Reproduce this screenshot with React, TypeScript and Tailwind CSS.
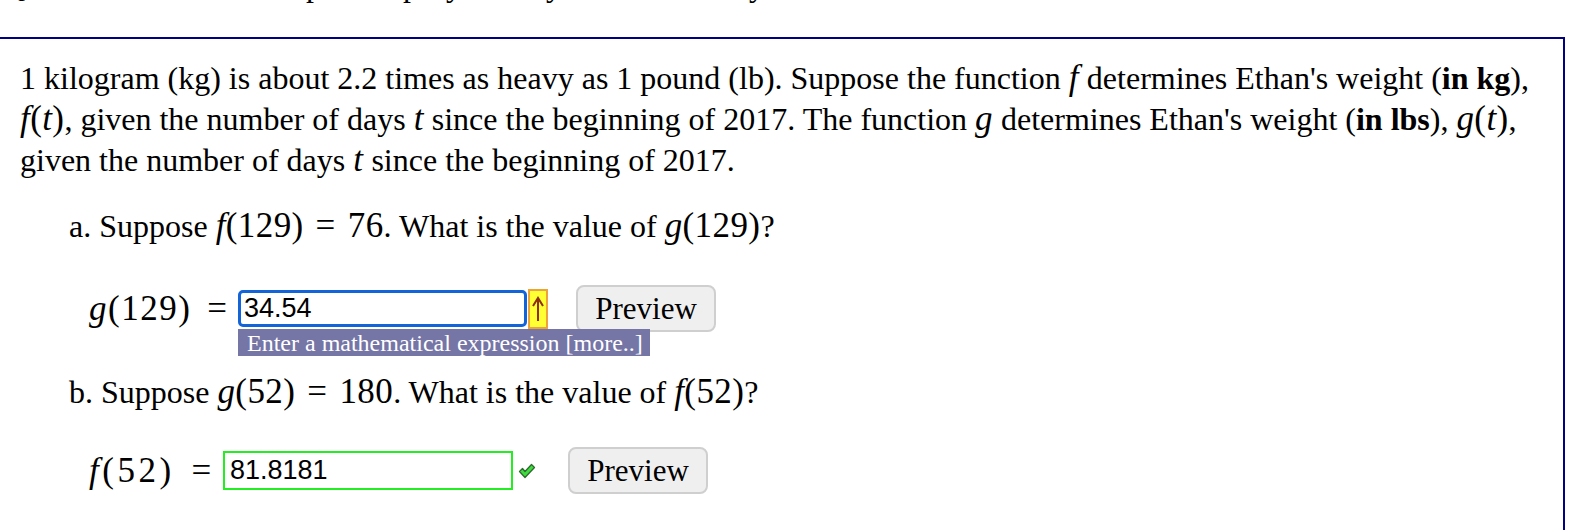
import React from 'react';

// math pieces are a little larger and wider than the text, as MathJax draws them
function M({ children, className }: { children: React.ReactNode; className?: string }) {
  return <span className={`text-[35px] leading-none ${className ?? 'tracking-[0.4px]'}`}>{children}</span>;
}

function V({ children }: { children: React.ReactNode }) {
  return <span className="italic">{children}</span>;
}

function Eq({ className }: { className?: string }) {
  return <span className={className ?? 'mx-[12px]'}>=</span>;
}

function PreviewButton({ className }: { className?: string }) {
  return (
    <button className={`h-[47px] w-[140px] shrink-0 rounded-[8px] border-2 border-[#cfcfcf] bg-[#efefef] text-[31px] leading-none text-black ${className ?? ''}`}>
      Preview
    </button>
  );
}

export default function App() {
  return (
    <div className="h-[530px] w-full overflow-hidden bg-white font-['Liberation_Serif','Times_New_Roman',serif] text-black">
      {/* cut-off line from above */}
      <div className="h-[37px] overflow-hidden">
        <div className="mt-[-31px] flex whitespace-pre text-[32px] leading-[32px]">
          <span className="ml-[2px]">Q</span>
          <span className="ml-[281px]">p</span>
          <span className="ml-[81px]">p</span>
          <span className="ml-[27px]">y</span>
          <span className="ml-[84px]">y</span>
          <span className="ml-[187px]">y</span>
        </div>
      </div>

      <div className="mr-[27px] h-[600px] border-t-2 border-r-2 border-[#000080] pl-[20px] pt-[19px]">
        <div className="whitespace-nowrap text-[32px] leading-[41px]">
          <div>
            1 kilogram (kg) is about 2.2 times as heavy as 1 pound (lb). Suppose the function <M><V>f</V></M> determines Ethan's weight (<b>in kg</b>),
          </div>
          <div>
            <M><V>f</V>(<V>t</V>)</M>, given the number of days <M><V>t</V></M> since the beginning of 2017. The function <M><V>g</V></M> determines Ethan's weight (<b>in lbs</b>), <M><V>g</V>(<V>t</V>)</M>,
          </div>
          <div>
            given the number of days <M><V>t</V></M> since the beginning of 2017.
          </div>
        </div>

        <div className="ml-[49px] mt-[25px] whitespace-nowrap text-[32px] leading-[41px]">
          a. Suppose <M><V>f</V>(129)<Eq />76</M>. What is the value of <M><V>g</V>(129)</M>?
        </div>

        <div className="ml-[69px] mt-[38px] flex h-[47px] items-center text-[32px]">
          <span className="w-[149px] shrink-0 whitespace-nowrap">
            <M className="tracking-[1.5px]"><V>g</V>(129)<Eq className="mx-[16px]" /></M>
          </span>
          <div className="relative">
            <div className="flex h-[37px] w-[289px] items-center rounded-[5px] border-[3px] border-[#1264d8] bg-white pl-[3px] font-['Liberation_Sans',Arial,sans-serif] text-[27px]">
              34.54
            </div>
            <div className="absolute left-0 top-[39px] flex h-[27px] w-[412px] items-center whitespace-nowrap bg-[#7575a6] pl-[9px] text-[24px] leading-none text-white">
              Enter a mathematical expression [more..]
            </div>
          </div>
          <div className="ml-[1px] flex h-[40px] w-[20px] items-center justify-center border-2 border-[#f0a23a] bg-[#ffff33]">
            <svg width="12" height="26" viewBox="0 0 12 26">
              <path d="M6 25 V4" stroke="#8b2f10" strokeWidth="2" />
              <path d="M1 10 L6 2 L11 10" fill="none" stroke="#8b2f10" strokeWidth="2" />
            </svg>
          </div>
          <PreviewButton className="ml-[28px]" />
        </div>

        <div className="ml-[49px] mt-[40px] whitespace-nowrap text-[32px] leading-[41px]">
          b. Suppose <M><V>g</V>(52)<Eq />180</M>. What is the value of <M><V>f</V>(52)</M>?
        </div>

        <div className="ml-[69px] mt-[34px] flex h-[47px] items-center text-[32px]">
          <span className="w-[134px] shrink-0 whitespace-nowrap">
            <M className="tracking-[3.5px]"><V>f</V>(52)<Eq className="ml-[17px]" /></M>
          </span>
          <div className="flex h-[39px] w-[290px] items-center border-2 border-[#22ee22] bg-white pl-[5px] font-['Liberation_Sans',Arial,sans-serif] text-[27px]">
            81.8181
          </div>
          <svg className="ml-[5px]" width="18" height="16" viewBox="0 0 18 16">
            <path d="M1.5 8.5 L4.5 5.5 L7 8.5 L13.5 1.5 L16.5 4.5 L7 14.5 Z" fill="#3fdc3f" stroke="#2d6b2d" strokeWidth="1.3" strokeLinejoin="round" />
          </svg>
          <PreviewButton className="ml-[32px]" />
        </div>
      </div>
    </div>
  );
}
